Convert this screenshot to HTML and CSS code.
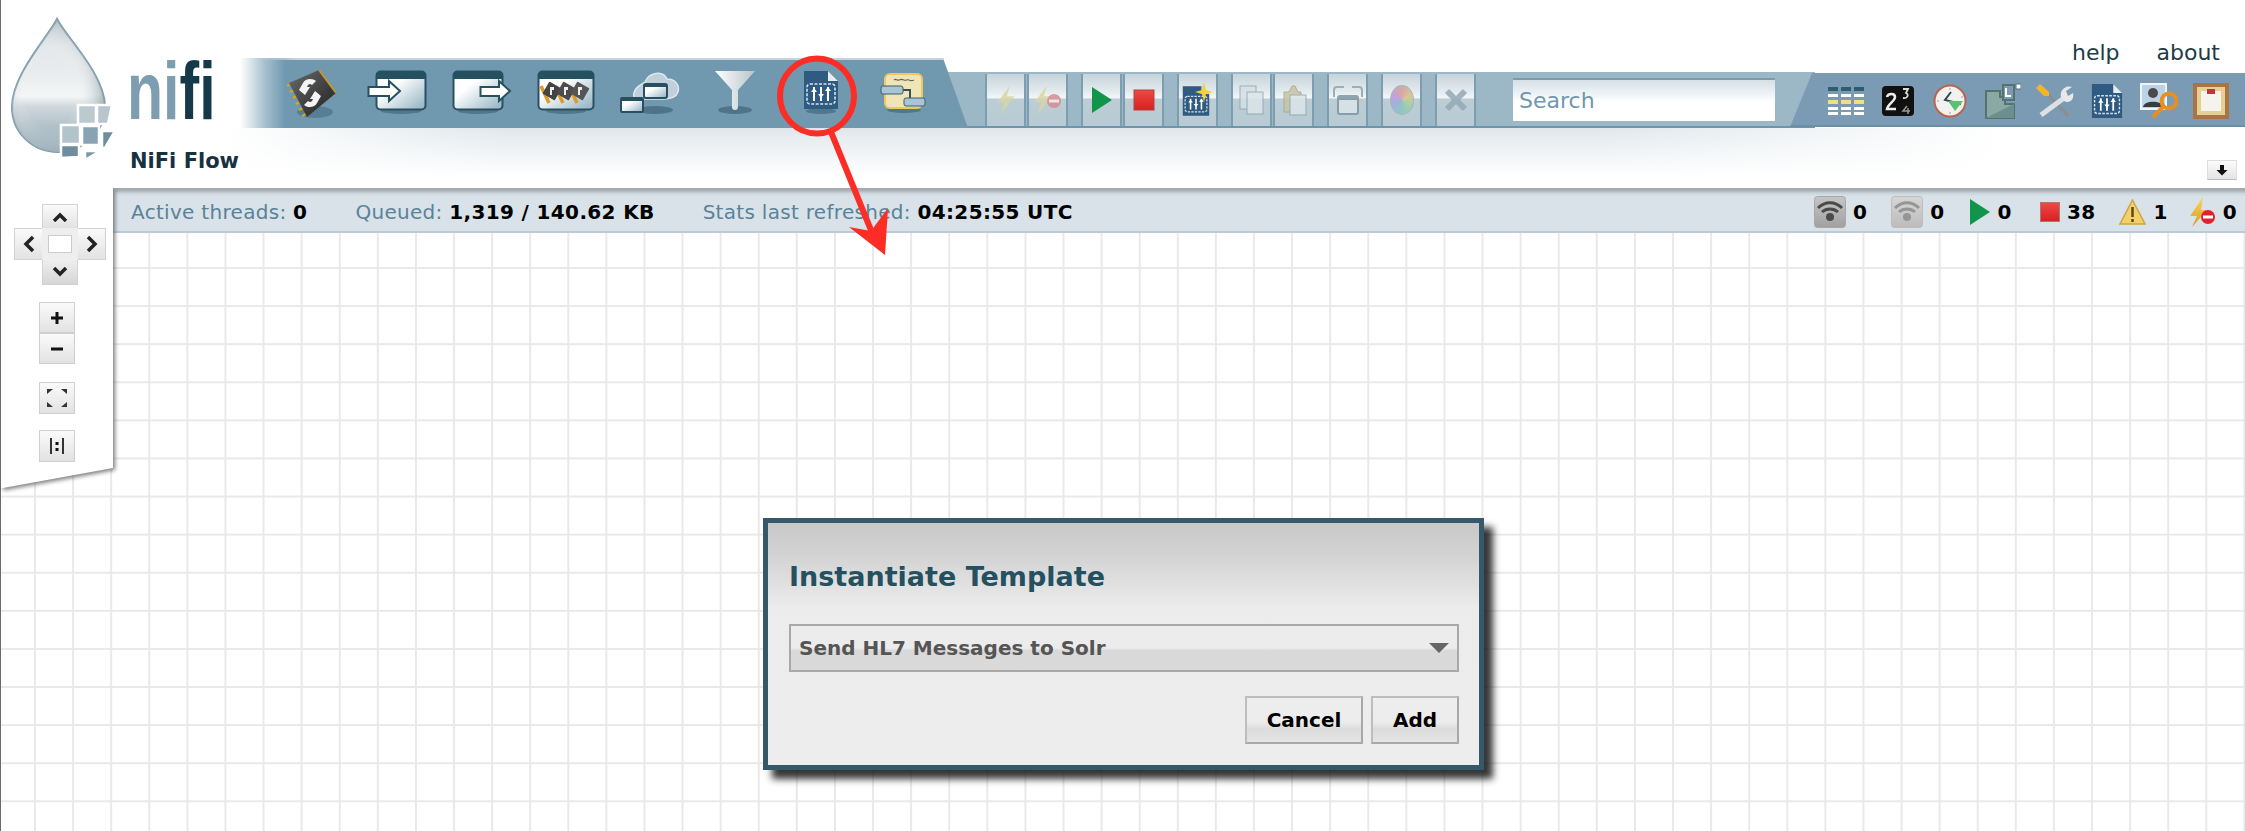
FILE: index.html
```html
<!DOCTYPE html>
<html lang="en">
<head>
<meta charset="utf-8">
<title>NiFi Flow</title>
<link rel="stylesheet" href="styles.css">
</head>
<body>
<svg class="defs" width="0" height="0" aria-hidden="true">
  <defs>
    <linearGradient id="winFill" x1="0" y1="0" x2="1" y2="1"><stop offset="0.35" stop-color="#fff"/><stop offset="1" stop-color="#8fb0c0"/></linearGradient>
    <linearGradient id="chipFill" x1="0" y1="0" x2="1" y2="1"><stop offset="0" stop-color="#6a6a6a"/><stop offset="1" stop-color="#1f1f1f"/></linearGradient>
    <linearGradient id="funnelFill" x1="0" y1="0" x2="1" y2="0"><stop offset="0" stop-color="#fff"/><stop offset="1" stop-color="#b8c4cb"/></linearGradient>
    <linearGradient id="dropFill" x1="0" y1="0" x2="0" y2="1"><stop offset="0" stop-color="#dfe3e5"/><stop offset="0.4" stop-color="#e9ecee"/><stop offset="0.58" stop-color="#f4f6f6"/><stop offset="0.66" stop-color="#cfd8dc"/><stop offset="1" stop-color="#8aa3b0"/></linearGradient>
    <radialGradient id="dropShade" cx="0.42" cy="0.55" r="0.6"><stop offset="0.45" stop-color="#fff" stop-opacity="0"/><stop offset="1" stop-color="#83989f" stop-opacity="0.75"/></radialGradient>
    <linearGradient id="boltFill" x1="0" y1="0" x2="0" y2="1"><stop offset="0" stop-color="#f9d65c"/><stop offset="1" stop-color="#d99a1f"/></linearGradient>
    <linearGradient id="stopFill" x1="0" y1="0" x2="0" y2="1"><stop offset="0" stop-color="#ee4a44"/><stop offset="1" stop-color="#d81f22"/></linearGradient>
    <linearGradient id="wifiOn" x1="0" y1="0" x2="0" y2="1"><stop offset="0" stop-color="#c6c6c6"/><stop offset="1" stop-color="#a0a0a0"/></linearGradient>
    <linearGradient id="wifiOff" x1="0" y1="0" x2="0" y2="1"><stop offset="0" stop-color="#d6d6d6"/><stop offset="1" stop-color="#bcbcbc"/></linearGradient>

    <symbol id="ico-template" viewBox="0 0 36 40">
      <path d="M1 1H25L35 11V39H1Z" fill="#2f5a82"/>
      <path d="M25 1L35 11H25Z" fill="#e6ecef"/>
      <rect x="4" y="14" width="28" height="20" rx="3" fill="none" stroke="#d8e2ea" stroke-width="1.6" stroke-dasharray="3 1.5"/>
      <path d="M11 17V31M18 17V31M25 17V31" stroke="#fff" stroke-width="2"/>
      <path d="M8 22h6l-3-4zM15 24h6l-3 4zM22 21h6l-3-4z" fill="#fff"/>
    </symbol>
    <symbol id="ico-bolt" viewBox="0 0 26 40">
      <path d="M18 1L2 23H11L6 39L24 15H14Z"/>
    </symbol>
  </defs>
</svg>

<div class="page">
  <header class="masthead">
    <div class="brand">
      <svg class="drop" width="116" height="160" viewBox="0 0 116 160" aria-hidden="true">
        <path d="M56 7C64 24 104 62 104 95C104 120 82 140 57 140C31 140 11 120 11 95C11 62 48 24 56 7Z" fill="url(#dropFill)" stroke="#7f9dac" stroke-width="2"/>
        <path d="M56 7C64 24 104 62 104 95C104 120 82 140 57 140C31 140 11 120 11 95C11 62 48 24 56 7Z" fill="url(#dropShade)"/>
        <g stroke="#fff" stroke-width="2.500">
          <path d="M77 93H95V112H77Z" fill="#bccad0"/>
          <path d="M96 93H111L107 112H96Z" fill="#b7c6cd"/>
          <path d="M60 113H79V132H60Z" fill="#b3c3cb"/>
          <path d="M81 114H98V133H81Z" fill="#88a3b1"/>
          <path d="M101 119H114L104 136H101Z" fill="#6f8e9d"/>
          <path d="M60 133H78V145L60 146Z" fill="#6f8e9d"/>
          <path d="M84 139H99L84 148Z" fill="#7b98a7"/>
        </g>
      </svg>
      <div class="brand-text">
        <div class="wordmark"><span class="nifi-a">ni</span><span class="nifi-b">fi</span></div>
        <h1 class="flow-name">NiFi Flow</h1>
      </div>
    </div>

    <div class="masthead-main">
      <nav class="top-links"><a class="top-link">help</a><a class="top-link">about</a></nav>

      <div class="toolbar">
        <div class="tools-primary">
          <div class="tool tool-chip">
            <svg width="60" height="56" viewBox="0 0 60 56">
              <ellipse cx="36" cy="47" rx="18" ry="6" fill="#34566a" opacity=".4"/>
              <g stroke="#e0a020" stroke-width="2.500"><path d="M8 21L14 18M11 27L17 24M14 33L20 30M17 39L23 36M20 45L26 42M23 51L29 48"/></g>
              <path d="M40 5L57 28L28 52L10 18Z" fill="url(#chipFill)"/>
              <path d="M40 5L57 28" stroke="#c7942e" stroke-width="2"/>
              <path d="M20 25L24 18C26 13 34 13 37 16L33 20C31 18 29 19 28 22L31 22L26 30Z" fill="#f4f4f4"/>
              <path d="M42 31L38 38C36 43 28 43 25 40L29 36C31 38 33 37 34 34L31 34L36 26Z" fill="#f4f4f4"/>
            </svg>
          </div>
          <div class="tool">
            <svg width="60" height="46" viewBox="0 0 60 46">
              <ellipse cx="34" cy="41" rx="20" ry="3" fill="#34566a" opacity=".5"/>
              <rect x="9.500" y="1.500" width="49" height="38" rx="4" fill="url(#winFill)" stroke="#2a4f60" stroke-width="2"/>
              <path d="M9 6a4 4 0 0 1 4-4H55a4 4 0 0 1 4 4V9H9Z" fill="#24505f"/>
              <path d="M1.500 17H22V11L33 21L22 31V26H1.500Z" fill="#fff" stroke="#24505f" stroke-width="2"/>
            </svg>
          </div>
          <div class="tool">
            <svg width="60" height="46" viewBox="0 0 60 46">
              <ellipse cx="26" cy="41" rx="20" ry="3" fill="#34566a" opacity=".5"/>
              <rect x="1.500" y="1.500" width="49" height="38" rx="4" fill="url(#winFill)" stroke="#2a4f60" stroke-width="2"/>
              <path d="M1 6a4 4 0 0 1 4-4H47a4 4 0 0 1 4 4V9H1Z" fill="#24505f"/>
              <path d="M28.500 17H47V11L58 21L47 31V26H28.500Z" fill="#fff" stroke="#24505f" stroke-width="2"/>
            </svg>
          </div>
          <div class="tool">
            <svg width="58" height="46" viewBox="0 0 58 46">
              <ellipse cx="29" cy="41" rx="20" ry="3" fill="#34566a" opacity=".5"/>
              <rect x="1.500" y="1.500" width="55" height="38" rx="4" fill="url(#winFill)" stroke="#2a4f60" stroke-width="2"/>
              <path d="M1 6a4 4 0 0 1 4-4H53a4 4 0 0 1 4 4V9H1Z" fill="#24505f"/>
              <g stroke="#dd9a2a" stroke-width="3.500"><path d="M4 16L12 33M18 16L26 33M32 16L40 33"/></g>
              <rect x="8" y="14" width="14" height="14" rx="1" transform="rotate(30 15 21)" fill="#444"/>
              <rect x="22" y="14" width="14" height="14" rx="1" transform="rotate(30 29 21)" fill="#4c4c4c"/>
              <rect x="36" y="14" width="14" height="14" rx="1" transform="rotate(30 43 21)" fill="#555"/>
              <path d="M13 17h4v3h-2v5h-2zM27 17h4v3h-2v5h-2zM41 17h4v3h-2v5h-2z" fill="#eee"/>
            </svg>
          </div>
          <div class="tool">
            <svg width="62" height="46" viewBox="0 0 62 46">
              <ellipse cx="36" cy="40" rx="18" ry="4" fill="#34566a" opacity=".55"/>
              <path d="M15 28C13 18 22 15 26 12C30 2 44 0 48 9C56 9 61 15 59 22C57 28 50 29 44 29H20Z" fill="#bfd0da" stroke="#dfe8ed" stroke-width="1.500"/>
              <rect x="25" y="14" width="23" height="14" rx="2" fill="url(#winFill)" stroke="#2a4f60" stroke-width="2"/>
              <rect x="25" y="14" width="23" height="3" fill="#24505f"/>
              <rect x="2" y="28" width="22" height="14" rx="1" fill="url(#winFill)" stroke="#2a4f60" stroke-width="2"/>
              <rect x="2" y="28" width="22" height="3" fill="#24505f"/>
            </svg>
          </div>
          <div class="tool">
            <svg width="44" height="46" viewBox="0 0 44 46">
              <ellipse cx="22" cy="40" rx="17" ry="4" fill="#34566a" opacity=".55"/>
              <path d="M2 1H42L25 20V37A3 3 0 0 1 19 37V20Z" fill="url(#funnelFill)"/>
            </svg>
          </div>
          <div class="tool tool-tpl">
            <svg width="40" height="46" viewBox="0 0 40 46">
              <ellipse cx="20" cy="41" rx="15" ry="3" fill="#34566a" opacity=".5"/>
              <use href="#ico-template" x="2" y="0" width="36" height="40"/>
            </svg>
          </div>
          <div class="tool">
            <svg width="46" height="42" viewBox="0 0 46 42">
              <ellipse cx="24" cy="38" rx="17" ry="3" fill="#34566a" opacity=".5"/>
              <rect x="5" y="2" width="37" height="34" rx="5" fill="#efe5b9" stroke="#eccb58" stroke-width="2"/>
              <path d="M14 8c2-2 3 1 5 0s3-1 5 0 3-1 5 0 3 1 5 0" stroke="#665" stroke-width="1.200" fill="none"/>
              <path d="M22 18H30V28" stroke="#3b4f58" stroke-width="2" fill="none"/>
              <rect x="1" y="14" width="22" height="8" rx="2" fill="#a7c5d6" stroke="#3f5c6a"/>
              <rect x="24" y="26" width="21" height="8" rx="2" fill="#a7c5d6" stroke="#3f5c6a"/>
            </svg>
          </div>
        </div>

        <div class="tools-actions">
          <div class="btn-group">
            <button class="act-btn" aria-label="Enable"><svg class="faded" width="20" height="32"><use href="#ico-bolt" width="20" height="32" fill="#d8d6a4"/></svg></button>
            <button class="act-btn" aria-label="Disable"><svg class="faded" width="30" height="32" viewBox="0 0 30 32"><use href="#ico-bolt" width="20" height="32" fill="#d8d6a4"/><circle cx="21" cy="17" r="7" fill="#d98b92"/><rect x="16" y="15.500" width="10" height="3" fill="#eee"/></svg></button>
          </div>
          <div class="btn-group">
            <button class="act-btn" aria-label="Start"><svg width="24" height="28"><path d="M2 1L22 14L2 27Z" fill="#10964a"/></svg></button>
            <button class="act-btn" aria-label="Stop"><svg width="22" height="22"><rect x="1" y="1" width="20" height="20" fill="url(#stopFill)" stroke="#a44"/></svg></button>
          </div>
          <div class="btn-group">
            <button class="act-btn" aria-label="Create template"><svg width="32" height="36" viewBox="0 0 32 36"><use href="#ico-template" x="0" y="2" width="28" height="34"/><path d="M22 0L24 8L31 10L24 12L22 20L20 12L13 10L20 8Z" fill="#f6cf3a"/></svg></button>
          </div>
          <div class="btn-group">
            <button class="act-btn" aria-label="Copy"><svg class="faded" width="26" height="30"><rect x="1" y="1" width="16" height="23" fill="#d5e0e6" stroke="#8fa5b0"/><rect x="8" y="7" width="16" height="22" fill="#dbe5ea" stroke="#8fa5b0"/></svg></button>
            <button class="act-btn" aria-label="Paste"><svg class="faded" width="26" height="32"><path d="M3 8H8L11 2H14L17 8H20V28H3Z" fill="#c8c4a4" stroke="#a6a68c"/><rect x="9" y="11" width="16" height="20" fill="#dbe5ea" stroke="#8fa5b0"/></svg></button>
          </div>
          <div class="btn-group">
            <button class="act-btn" aria-label="Group"><svg class="faded" width="32" height="30"><path d="M2 12V5Q2 2 5 2H12M20 2H27Q30 2 30 5V12" fill="none" stroke="#8fa5b0" stroke-width="2"/><rect x="6" y="11" width="20" height="18" rx="2" fill="#dbe5ea" stroke="#7e96a2" stroke-width="2"/><rect x="6" y="11" width="20" height="4" fill="#7e96a2"/></svg></button>
          </div>
          <div class="btn-group">
            <button class="act-btn" aria-label="Fill color"><span class="color-wheel"></span></button>
          </div>
          <div class="btn-group">
            <button class="act-btn" aria-label="Delete"><svg class="faded" width="26" height="26"><path d="M4 4L22 22M22 4L4 22" stroke="#93aab6" stroke-width="6"/></svg></button>
          </div>
          <input class="search" type="text" placeholder="Search">
        </div>

        <div class="tools-global">
          <div class="gtool">
            <svg width="36" height="28"><g fill="#fff"><path d="M0 7h10v3H0zM13 7h10v3H13zM26 7h10v3H26zM0 20h10v3H0zM13 20h10v3H13zM26 20h10v3H26zM0 25h10v3H0zM13 25h10v3H13zM26 25h10v3H26z"/></g><g fill="#2f5d6e"><path d="M0 0h10v4H0zM13 0h10v4H13zM26 0h10v4H26z"/></g><g fill="#f2dd8b"><path d="M0 13h10v4H0zM13 13h10v4H13zM26 13h10v4H26z"/></g></svg>
          </div>
          <div class="gtool">
            <svg width="32" height="30" viewBox="0 0 32 30"><rect width="32" height="30" rx="4" fill="#111"/><path d="M5 11C6 7 13 7 13 11C13 15 6 18 5 23H14" fill="none" stroke="#eee" stroke-width="2.500"/><path d="M21 3H26L24 7C27 8 26 13 21 12" fill="none" stroke="#ddd" stroke-width="1.800"/><path d="M25 20L21 25H28M26 22V28" fill="none" stroke="#999" stroke-width="1.500"/></svg>
          </div>
          <div class="gtool">
            <svg width="34" height="34" viewBox="0 0 34 34"><circle cx="17" cy="17" r="15.500" fill="#f1f2f0" stroke="#b8654f" stroke-width="2"/><path d="M18 8L12 16L28 20" fill="none" stroke="#2f4a50" stroke-width="2"/><path d="M15 17L30 17L22 27Z" fill="#5cc070"/><g fill="#bbb"><circle cx="17" cy="5" r="1"/><circle cx="29" cy="13" r="1"/><circle cx="5" cy="17" r="1"/><circle cx="17" cy="29" r="1"/></g></svg>
          </div>
          <div class="gtool">
            <svg width="36" height="36" viewBox="0 0 36 36"><path d="M1 8H15V14H20V21H29V35H1Z" fill="#8aa8a4" stroke="#55726e" stroke-width="2"/><path d="M1 35L29 21V35Z" fill="#6a8f8c"/><rect x="18" y="2" width="11" height="15" fill="#7b9bb5" stroke="#55726e" stroke-width="2"/><path d="M21 5V13H26" stroke="#fff" stroke-width="2" fill="none"/><rect x="31" y="1" width="5" height="5" fill="#fff" stroke="#55726e"/></svg>
          </div>
          <div class="gtool">
            <svg width="40" height="36" viewBox="0 0 40 36"><path d="M9 7L33 33" stroke="#8d8d8d" stroke-width="3"/><path d="M29 15L6 32" stroke="#dde1e3" stroke-width="5"/><path d="M1 5L5 1L14 9L14 13L9 13Z" fill="#f3b529"/><path d="M28 17C22 11 29 1 37 4L31 8L33 13L38 10C40 17 33 22 28 17Z" fill="#e6e8e9"/></svg>
          </div>
          <div class="gtool">
            <svg width="32" height="36"><use href="#ico-template" width="32" height="36"/></svg>
          </div>
          <div class="gtool">
            <svg width="38" height="36" viewBox="0 0 38 36"><rect x="1" y="1" width="25" height="25" fill="#bcd3e6" stroke="#eef4f8" stroke-width="2"/><circle cx="13" cy="10" r="5" fill="#4a4a4a"/><path d="M3 24C4 17 22 17 23 24Z" fill="#3b3b3b"/><circle cx="29" cy="18" r="7.500" fill="none" stroke="#e88f21" stroke-width="4"/><path d="M24 23L13 34" stroke="#e88f21" stroke-width="4"/></svg>
          </div>
          <div class="gtool">
            <svg width="36" height="36" viewBox="0 0 36 36"><rect width="36" height="36" fill="#a87445"/><rect x="4" y="4" width="28" height="28" fill="#e7cf8f"/><rect x="8" y="8" width="20" height="20" fill="#f5f3ec"/><rect x="14" y="6" width="8" height="5" fill="#c8323a"/></svg>
          </div>
        </div>
      </div>

      <div class="subhead">
        <button class="mini-btn" aria-label="Expand"><svg width="12" height="12"><path d="M4 1H8V6H11.500L6 11.500L.5 6H4Z" fill="#111"/></svg></button>
      </div>
    </div>
  </header>

  <section class="statusbar">
    <div class="stats">
      <span class="stat">Active threads: <b>0</b></span>
      <span class="stat">Queued: <b>1,319 / 140.62 KB</b></span>
      <span class="stat">Stats last refreshed: <b>04:25:55 UTC</b></span>
    </div>
    <div class="counts">
      <span class="count"><svg width="32" height="32" viewBox="0 0 32 32"><rect x=".5" y=".5" width="31" height="31" rx="3" fill="url(#wifiOn)" stroke="#a8a8a8"/><path d="M4 12C11 5 21 5 28 12M8 16C12.500 12 19.500 12 24 16" fill="none" stroke="#4a4a4a" stroke-width="3"/><circle cx="16" cy="21" r="4" fill="#4a4a4a"/></svg><b>0</b></span>
      <span class="count"><svg width="32" height="32" viewBox="0 0 32 32"><rect x=".5" y=".5" width="31" height="31" rx="3" fill="url(#wifiOff)" stroke="#bdbdbd"/><path d="M4 12C11 5 21 5 28 12M8 16C12.500 12 19.500 12 24 16" fill="none" stroke="#969696" stroke-width="3"/><circle cx="16" cy="21" r="4" fill="#969696"/></svg><b>0</b></span>
      <span class="count"><svg width="22" height="28"><path d="M1 1L21 14L1 27Z" fill="#10964a"/></svg><b>0</b></span>
      <span class="count count-stop"><svg width="20" height="20"><rect x=".5" y=".5" width="19" height="19" fill="url(#stopFill)" stroke="#a77"/></svg><b>38</b></span>
      <span class="count"><svg width="27" height="26"><path d="M13.500 1L26 25H1Z" fill="#f3d168" stroke="#c9a646" stroke-width="1.500"/><path d="M13.500 8V18M13.500 20V23" stroke="#5c4a1e" stroke-width="2.500"/></svg><b>1</b></span>
      <span class="count count-bolt"><svg width="28" height="30" viewBox="0 0 28 30"><path d="M15 0L2 19L9 19L4 30L19 13H13Z" fill="url(#boltFill)"/><circle cx="20" cy="20" r="7" fill="#e0222a"/><rect x="15" y="18.500" width="10" height="3" fill="#fff"/></svg><b>0</b></span>
    </div>
  </section>

  <main class="canvas"></main>

  <aside class="palette-wrap">
    <div class="palette">
      <div class="dpad">
        <button class="pad-btn pad-up" aria-label="Up"><svg width="16" height="10"><path d="M2 9L8 3L14 9" fill="none" stroke="#222" stroke-width="3.500"/></svg></button>
        <button class="pad-btn pad-left" aria-label="Left"><svg width="12" height="18"><path d="M10 2L3 9L10 16" fill="none" stroke="#222" stroke-width="3.500"/></svg></button>
        <span class="pad-center"></span>
        <button class="pad-btn pad-right" aria-label="Right"><svg width="12" height="18"><path d="M2 2L9 9L2 16" fill="none" stroke="#222" stroke-width="3.500"/></svg></button>
        <button class="pad-btn pad-down" aria-label="Down"><svg width="16" height="10"><path d="M2 1L8 7L14 1" fill="none" stroke="#222" stroke-width="3.500"/></svg></button>
      </div>
      <div class="zoom-stack">
        <button class="pal-btn" aria-label="Zoom in"><svg width="12" height="12"><path d="M0 6H12M6 0V12" stroke="#111" stroke-width="3"/></svg></button>
        <button class="pal-btn" aria-label="Zoom out"><svg width="12" height="4"><path d="M0 2H12" stroke="#111" stroke-width="3"/></svg></button>
      </div>
      <button class="pal-btn pal-single" aria-label="Fit"><svg width="20" height="18"><path d="M0 0H6L0 5ZM20 0H14L20 5ZM0 18H6L0 13ZM20 18H14L20 13Z" fill="#333"/></svg></button>
      <button class="pal-btn pal-single" aria-label="Actual size"><svg width="16" height="18"><path d="M2 1V17M14 1V17" stroke="#333" stroke-width="2"/><path d="M8 5V8M8 11V14" stroke="#111" stroke-width="3"/></svg></button>
    </div>
  </aside>

  <div class="dialog">
    <h2 class="dialog-title">Instantiate Template</h2>
    <div class="select">
      <span>Send HL7 Messages to Solr</span>
      <svg width="20" height="10"><path d="M0 0H20L10 10Z" fill="#666"/></svg>
    </div>
    <div class="dialog-actions">
      <button class="dlg-btn dlg-cancel">Cancel</button>
      <button class="dlg-btn dlg-add">Add</button>
    </div>
  </div>

  <svg class="annotation" width="2245" height="831" aria-hidden="true">
    <ellipse cx="817" cy="96" rx="37" ry="37.500" fill="none" stroke="#fb2d25" stroke-width="6"/>
    <path d="M831 132L875 240" stroke="#fb2d25" stroke-width="6"/>
    <path d="M885 255L849 227L871 231L888 208Z" fill="#fb2d25"/>
  </svg>
</div>
</body>
</html>
```
FILE: styles.css
```css
* { box-sizing: border-box; }
html, body { margin: 0; padding: 0; background: #fff; }
body { font-family: "DejaVu Sans", Verdana, sans-serif; overflow: hidden; }
.defs { position: absolute; }
button { font-family: inherit; padding: 0; cursor: pointer; }

.page {
  position: relative;
  width: 2245px;
  height: 831px;
  border-left: 1px solid #6b6b6b;
  display: flex;
  flex-direction: column;
  overflow: hidden;
}

/* masthead */
.masthead { display: flex; height: 188px; flex: none; }
.brand { display: flex; width: 224px; flex: none; position: relative; z-index: 3; }
.drop { flex: none; margin-top: 12px; margin-right: 13px; width: 116px; height: 160px; }
.brand-text { display: flex; flex-direction: column; }
.wordmark {
  margin: 51px 0 0 -3px;
  height: 80px;
  font-family: "Liberation Sans", sans-serif;
  font-size: 82px;
  font-weight: 700;
  line-height: 80px;
  transform: scaleX(.72);
  transform-origin: 0 50%;
  white-space: nowrap;
}
.nifi-a { color: #7c9eb0; }
.nifi-b { color: #16394a; }
.flow-name { margin: 17px 0 0; font-size: 21px; line-height: 26px; font-weight: 700; color: #17323f; white-space: nowrap; }

.masthead-main { flex: 1; min-width: 0; display: flex; flex-direction: column; }
.top-links { height: 58px; display: flex; justify-content: flex-end; align-items: flex-start; gap: 37px; padding: 40px 25px 0 0; }
.top-link { font-size: 22px; line-height: 26px; color: #1e3b48; }

.toolbar { height: 70px; display: flex; align-items: flex-end; flex: none; }
.tools-primary {
  position: relative;
  z-index: 2;
  flex: none;
  width: 743px;
  height: 70px;
  padding-left: 46px;
  display: flex;
  align-items: center;
  background:
    linear-gradient(90deg, rgba(196,212,220,0) 30px, #c4d4dc 70px) 0 0 / 100% 2px no-repeat,
    linear-gradient(90deg, #fff 15px, #dce7ec 25px, #a6c0cd 40px, #7099b0 60px, #7099b0 100%);
  clip-path: polygon(0 0, 718px 0, 743px 100%, 0 100%);
}
.tool { flex: none; width: 84.300px; display: flex; justify-content: center; align-items: center; }
.tool svg { display: block; }
.tool-chip svg { margin-right: 8px; }
.tool-tpl svg { margin-left: 5px; }

.tools-actions {
  flex: none;
  width: 867px;
  height: 56px;
  margin-left: -20px;
  padding: 2px 0 2px 37px;
  display: flex;
  align-items: stretch;
  gap: 13px;
  background: #9cb7c6;
  border-bottom: 2px solid #6f95ab;
}
.btn-group { display: flex; gap: 1px; height: 52px; }
.act-btn {
  width: 41px;
  height: 52px;
  border: 0;
  border-left: 2px solid #7d9db0;
  border-right: 2px solid #7d9db0;
  display: flex;
  align-items: center;
  justify-content: center;
  background: linear-gradient(180deg, #c5d4db 0, #e8eef1 38%, #f4f7f8 46%, #bccdd5 48%, #b8cad3 100%);
}
.faded { opacity: .85; }
.color-wheel {
  width: 24px; height: 30px; border-radius: 50%;
  background: conic-gradient(#d9a8a0, #d8c79a, #a9d0a6, #8fc7c0, #9eb2dd, #c4a2dc, #d9a8a0);
  border: 1px solid #a4b4bc;
}
.search {
  width: 262px;
  height: 43px;
  margin: 4px 0 0 24px;
  padding: 0 6px;
  border: 0;
  border-top: 2px solid #7d99ab;
  font-family: inherit;
  font-size: 22px;
  color: #6f97ad;
  background: linear-gradient(180deg, #d5e0e6 0, #ffffff 55%);
  outline: 0;
  border-radius: 0;
}
.search::placeholder { color: #6f97ad; opacity: 1; }

.tools-global {
  position: relative;
  z-index: 2;
  flex: 1;
  min-width: 0;
  height: 54px;
  margin-left: -25px;
  margin-bottom: 1px;
  padding-left: 30px;
  display: flex;
  align-items: center;
  background: #7b9bb5;
  clip-path: polygon(22px 0, 100% 0, 100% 100%, 0 100%);
  border-bottom: 2px solid #6c8fa8;
}
.gtool { flex: none; width: 52.200px; display: flex; justify-content: center; align-items: center; padding-top: 3px; }
.gtool svg { display: block; }

.subhead {
  flex: 1;
  display: flex;
  justify-content: flex-end;
  align-items: flex-start;
  padding: 32px 8px 0 0;
  background:
    linear-gradient(90deg, #fff 0, rgba(255,255,255,0) 14%, rgba(255,255,255,0) 68%, #fff 88%),
    linear-gradient(180deg, #e0e7eb 0, #eef2f4 35%, #fff 80%);
}
.mini-btn {
  width: 30px; height: 20px;
  border: 1px solid #ddd; border-bottom-color: #bbb;
  display: flex; align-items: center; justify-content: center;
  background: linear-gradient(180deg, #fbfbfb, #e4e4e4);
}

/* status bar */
.statusbar {
  flex: none;
  height: 45px;
  margin-left: 112px;
  display: flex;
  justify-content: space-between;
  align-items: center;
  padding: 4px 8px 0 18px;
  background: linear-gradient(180deg, #9fa5a8 0, #aeb6ba 3px, #c8d4da 5px, #d8e2e8 8px, #d8e2e8 100%);
  border-bottom: 2px solid #b9cbd6;
  font-size: 20px;
}
.stats { display: flex; gap: 48px; }
.stat { color: #5a8299; white-space: nowrap; letter-spacing: .3px; }
.stat b, .count b { color: #000; letter-spacing: .35px; }
.counts { display: flex; align-items: center; gap: 24px; }
.count { display: flex; align-items: center; gap: 7px; font-size: 20px; }
.count svg { display: block; }
.count-stop { margin-left: 4px; }
.count-bolt { margin-left: -4px; }

.canvas {
  flex: 1;
  background-color: #fff;
  background-image:
    linear-gradient(#e9e9e9 2px, transparent 2px),
    linear-gradient(90deg, #e9e9e9 2px, transparent 2px);
  background-size: 38.100px 38.100px;
  background-position: 33px 34px;
}

/* palette */
.palette-wrap {
  position: absolute;
  left: 0;
  top: 188px;
  width: 120px;
  height: 310px;
  z-index: 2;
  filter: drop-shadow(2px 2px 2px rgba(80,80,80,.75));
  clip-path: inset(0 -10px -10px 0);
}
.palette {
  width: 112px;
  height: 300px;
  padding-top: 16px;
  display: flex;
  flex-direction: column;
  align-items: center;
  background: #fff;
  clip-path: polygon(0 0, 100% 0, 100% 280px, 2px 100%, 0 100%);
}
.dpad {
  display: grid;
  grid-template-columns: 28px 36px 28px;
  grid-template-rows: 24px 32px 25px;
  width: 92px;
  margin-left: 6px;
}
.pad-btn { border: 1px solid #d2d2d2; display: flex; align-items: center; justify-content: center; background: linear-gradient(180deg, #fafafa, #e2e2e2); }
.pad-up { grid-column: 2; grid-row: 1; border-bottom: 0; }
.pad-left { grid-column: 1; grid-row: 2; border-right: 0; }
.pad-right { grid-column: 3; grid-row: 2; border-left: 0; }
.pad-down { grid-column: 2; grid-row: 3; border-top: 0; background: linear-gradient(180deg, #eee, #d6d6d6); }
.pad-center { grid-column: 2; grid-row: 2; display: block; border: 6px solid #eee; border-top-width: 7px; border-bottom-width: 7px; background: #fff; box-shadow: inset 0 0 0 1px #ccc; }
.zoom-stack { display: flex; flex-direction: column; margin-top: 17px; }
.pal-btn {
  width: 36px;
  height: 31px;
  border: 1px solid #cfcfcf;
  display: flex; align-items: center; justify-content: center;
  background: linear-gradient(180deg, #fafafa, #e2e2e2);
}
.pal-single { margin-top: 17px; height: 32px; flex: none; }
.zoom-stack + .pal-single { margin-top: 18px; }
.pal-single + .pal-single { margin-top: 16px; }

/* dialog */
.dialog {
  position: absolute;
  left: 762px;
  top: 518px;
  width: 721px;
  height: 252px;
  padding: 0 20px 0 21px;
  z-index: 3;
  border: 5px solid #35596b;
  background: linear-gradient(180deg, #c8c8c8 0, #d4d4d4 35px, #ececec 85px, #ededed 100%);
  box-shadow: 9px 9px 7px rgba(20,20,20,.85);
}
.dialog-title { margin: 39px 0 0; font-size: 27px; line-height: 30px; font-weight: 700; color: #24505f; white-space: nowrap; }
.select {
  margin-top: 32px;
  height: 48px;
  border: 2px solid #a8a8a8;
  display: flex;
  justify-content: space-between;
  align-items: center;
  padding: 0 8px 0 8px;
  font-size: 20px;
  font-weight: 700;
  color: #555;
  background: linear-gradient(180deg, #ececec 0, #ececec 50%, #d9d9d9 56%, #dadada 100%);
}
.dialog-actions { display: flex; justify-content: flex-end; gap: 8px; margin-top: 24px; }
.dlg-btn {
  height: 48px;
  border: 2px solid #a8a8a8;
  border-top-color: #bdbdbd;
  border-left-color: #bdbdbd;
  font-size: 20px;
  font-weight: 700;
  color: #000;
  background: linear-gradient(180deg, #eeeeee 0, #ececec 55%, #dcdcdc 70%, #e4e4e4 100%);
}
.dlg-cancel { width: 118px; }
.dlg-add { width: 88px; }

.annotation { position: absolute; left: -1px; top: 0; z-index: 5; pointer-events: none; }
```
